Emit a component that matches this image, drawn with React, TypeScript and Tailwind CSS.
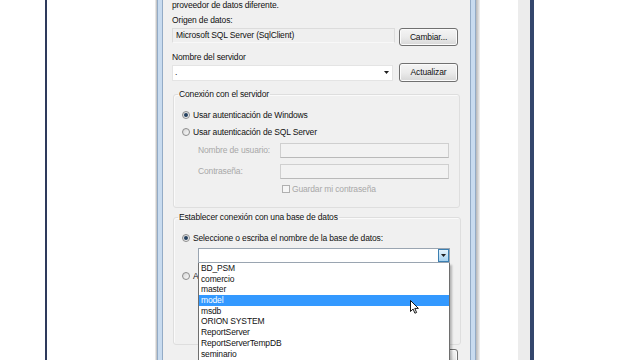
import React from 'react';

const databases = [
  'BD_PSM',
  'comercio',
  'master',
  'model',
  'msdb',
  'ORION SYSTEM',
  'ReportServer',
  'ReportServerTempDB',
  'seminario',
];

const Radio = ({ checked }: { checked?: boolean }) => (
  <span className="w-[8px] h-[8px] rounded-full border border-[#8c8c8c] bg-gradient-to-br from-[#d6d6d6] to-[#fafafa] flex items-center justify-center shrink-0">
    {checked && <span className="w-[4px] h-[4px] rounded-full bg-[#24405f]" />}
  </span>
);

const Button = ({ label, className = '' }: { label?: string; className?: string }) => (
  <button
    className={`w-[59px] h-[18px] shrink-0 rounded-[3px] border border-[#707070] bg-gradient-to-b from-[#f4f4f4] via-[#ebebeb] to-[#d7d7d7] shadow-[inset_0_0_0_1px_#fbfbfb] text-[#111] leading-none ${className}`}
  >
    {label}
  </button>
);

const Arrow = () => (
  <svg width="5" height="3" viewBox="0 0 5 3" className="shrink-0">
    <path d="M0 0h5L2.5 3z" fill="#1e1e1e" />
  </svg>
);

const App: React.FC = () => {
  return (
    <div className="w-[640px] h-[360px] bg-white flex overflow-hidden text-[8.5px] tracking-[-0.15px] text-[#111] font-['Liberation_Sans',Arial,sans-serif]">
      <div className="w-[45px] shrink-0" />
      <div className="w-[2px] shrink-0 bg-[#2e3a5c]" />
      <div className="w-[108px] shrink-0" />

      {/* Dialog window */}
      <div className="w-[325px] shrink-0 flex">
        <div className="w-[2px] bg-gradient-to-r from-[#f4f4f4] to-[#b8b8b8]" />
        <div className="w-[6px] bg-[#c8dbef] border-x border-[#93abc6]" />

        <div className="relative w-[307px] bg-[#f0f0f0] pl-[9px] pr-[12px] flex flex-col">
          <p className="h-[11px] leading-[11px]">proveedor de datos diferente.</p>
          <p className="mt-[4px] h-[10px] leading-[10px]">Origen de datos:</p>
          <div className="mt-[3px] h-[18px] flex gap-[4px]">
            <div className="flex-1 h-[15px] border border-[#dcdcdc] border-b-[#f8f8f8] bg-[#efefef] pl-[3px] leading-[13px]">
              Microsoft SQL Server (SqlClient)
            </div>
            <Button label="Cambiar..." />
          </div>

          <p className="mt-[6px] h-[10px] leading-[10px]">Nombre del servidor</p>
          <div className="mt-[1px] h-[19px] flex items-center">
            <div className="w-[221px] h-[16px] bg-white border border-[#e4e4e4] flex items-center pl-[2px] pr-[3px]">
              <span className="flex-1">.</span>
              <Arrow />
            </div>
            <Button label="Actualizar" className="ml-auto h-[19px]" />
          </div>

          {/* Server connection group */}
          <fieldset className="mt-[7px] ml-[1px] -mr-[2px] border border-[#dedede] rounded-[3px] shadow-[inset_1px_1px_0_#fafafa]">
            <legend className="ml-[4px] px-[1px] h-[10px] leading-[10px]">Conexión con el servidor</legend>
            <div className="pl-[8px] pr-[10px] pb-[13px]">
              <label className="mt-[11px] h-[10px] flex items-center gap-[3px]">
                <Radio checked />
                Usar autenticación de Windows
              </label>
              <label className="mt-[7px] h-[10px] flex items-center gap-[3px]">
                <Radio />
                Usar autenticación de SQL Server
              </label>
              <div className="mt-[6px] h-[15px] flex items-center pl-[16px] text-[#a8a8a8]">
                <span className="w-[82px]">Nombre de usuario:</span>
                <div className="flex-1 h-[15px] border border-[#cfcfcf] border-b-[#b9b9b9] bg-[#f2f2f2]" />
              </div>
              <div className="mt-[6px] h-[15px] flex items-center pl-[16px] text-[#a8a8a8]">
                <span className="w-[82px]">Contraseña:</span>
                <div className="flex-1 h-[15px] border border-[#cfcfcf] border-b-[#b9b9b9] bg-[#f2f2f2]" />
              </div>
              <label className="mt-[5px] h-[10px] flex items-center gap-[2px] pl-[100px] text-[#a8a8a8]">
                <span className="w-[8px] h-[8px] border border-[#b0b0b0] bg-[#f6f6f6] shrink-0" />
                Guardar mi contraseña
              </label>
            </div>
          </fieldset>

          {/* Database group */}
          <fieldset className="mt-[4px] ml-[1px] -mr-[2px] border border-[#dedede] rounded-[3px] shadow-[inset_1px_1px_0_#fafafa]">
            <legend className="ml-[4px] px-[1px] h-[10px] leading-[10px]">Establecer conexión con una base de datos</legend>
            <div className="pl-[8px] pr-[10px] pb-[12px]">
              <label className="mt-[11px] h-[10px] flex items-center gap-[3px]">
                <Radio checked />
                Seleccione o escriba el nombre de la base de datos:
              </label>
              <div className="mt-[5px] ml-[16px] w-[252px] relative">
                <div className="h-[15px] bg-white border border-[#9aa5b1] flex items-stretch">
                  <span className="flex-1" />
                  <span className="w-[11px] border border-[#3c7fb1] bg-gradient-to-b from-[#e6f4fc] to-[#a6d2f0] flex items-center justify-center">
                    <Arrow />
                  </span>
                </div>

                {/* Open dropdown list */}
                <ul className="absolute top-full left-0 w-[252px] h-[110px] z-10 bg-white border border-t-0 border-[#6e6e6e] shadow-[2px_2px_2px_rgba(0,0,0,0.25)]">
                  {databases.map((db) => (
                    <li
                      key={db}
                      className={`h-[10.7px] leading-[10.7px] pl-[2px] ${db === 'model' ? 'bg-[#3399ff] text-white' : ''}`}
                    >
                      {db}
                    </li>
                  ))}
                  <svg
                    width="9"
                    height="14"
                    viewBox="0 0 9 14"
                    className="absolute left-[211px] top-[37px]"
                  >
                    <path d="M0.5 0.5v11l2.6-2.5 1.8 4.2 1.7-.7-1.8-4.1h3.6z" fill="#fff" stroke="#000" strokeWidth="0.9" />
                  </svg>
                </ul>
              </div>
              <label className="mt-[8px] h-[10px] flex items-center gap-[3px]">
                <Radio />
                A
              </label>
              <div className="mt-[5px] ml-[16px] h-[15px] flex gap-[4px]">
                <div className="flex-1 h-[15px] bg-white border border-[#abadb3]" />
                <Button className="h-[15px]" />
              </div>
              <div className="mt-[16px] ml-[16px] h-[15px] bg-white border border-[#abadb3]" />
            </div>
          </fieldset>

          <div className="mt-[4px] flex justify-end">
            <Button />
          </div>
        </div>

        <div className="w-[6px] bg-[#c8dbef] border-x border-[#93abc6]" />
        <div className="w-[4px] bg-gradient-to-r from-[#b6b6b6] to-[#f4f4f4]" />
      </div>

      <div className="w-[38px] shrink-0" />
      <div className="w-[12px] shrink-0 bg-[#ececec]" />
      <div className="w-[4px] shrink-0 bg-[#34466c]" />
    </div>
  );
};

export default App;
